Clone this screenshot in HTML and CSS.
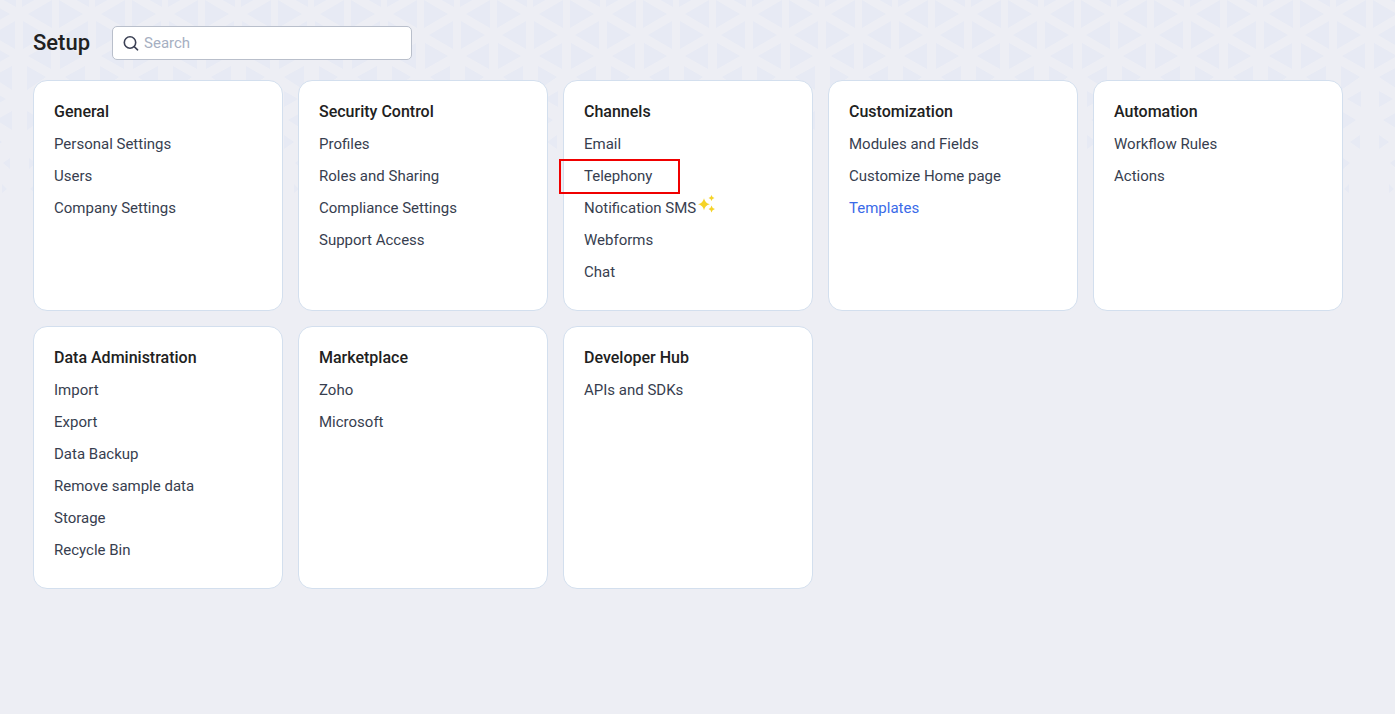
FILE: index.html
```html
<!DOCTYPE html>
<html lang="en">
<head>
<meta charset="utf-8">
<meta name="viewport" content="width=device-width, initial-scale=1">
<title>Setup</title>
<link rel="stylesheet" href="styles.css">
</head>
<body>
<svg class="backdrop" aria-hidden="true">
  <defs>
    <pattern id="tri" width="73" height="220" patternUnits="userSpaceOnUse">
      <g id="cell">
        <path d="M22-21V7L47-7ZM16-21V7L-9-7Z"/>
        <path d="M59 0V28L83 14ZM52 0V28L28 14Z"/>
        <path d="M23 21V49L47 35ZM15 21V49L-9 35Z"/>
        <path d="M60 43V69L83 56ZM51 43V69L28 56Z"/>
        <path d="M27 66V90L46 77ZM12 66V90L-8 77Z"/>
        <path d="M65 91V107L79 99ZM47 91V107L33 99Z"/>
        <path d="M27 111V130L42 120ZM12 111V130L-4 120Z"/>
        <path d="M65 135V149L75 142ZM46 135V149L36 142Z"/>
        <path d="M29 158V169L36 163ZM10 158V169L3 163Z"/>
        <path d="M75 184V193L80 189ZM35 184V193L30 189Z"/>
      </g>
      <use href="#cell" x="73"/>
      <use href="#cell" x="-73"/>
    </pattern>
  </defs>
  <rect width="100%" height="220" fill="url(#tri)"/>
</svg>
<header class="topbar">
  <h1 class="page-title">Setup</h1>
  <label class="search">
    <svg class="search-icon" viewBox="0 0 16 16" aria-hidden="true"><circle cx="7" cy="7.500" r="5.700"/><path d="M11.200 11.700L14.600 14.800"/></svg>
    <input class="search-input" type="search" placeholder="Search" aria-label="Search">
  </label>
</header>
<main class="cards">
  <section class="card">
    <h2 class="card-title">General</h2>
    <ul class="links">
      <li><a href="#">Personal Settings</a></li>
      <li><a href="#">Users</a></li>
      <li><a href="#">Company Settings</a></li>
    </ul>
  </section>
  <section class="card">
    <h2 class="card-title">Security Control</h2>
    <ul class="links">
      <li><a href="#">Profiles</a></li>
      <li><a href="#">Roles and Sharing</a></li>
      <li><a href="#">Compliance Settings</a></li>
      <li><a href="#">Support Access</a></li>
    </ul>
  </section>
  <section class="card">
    <h2 class="card-title">Channels</h2>
    <ul class="links">
      <li><a href="#">Email</a></li>
      <li class="marked"><a href="#">Telephony</a></li>
      <li class="featured"><a href="#">Notification SMS</a><svg class="sparkle" viewBox="0 0 18 18" aria-hidden="true"><path d="M6 3.300Q7 8.200 11.800 9.300Q7 10.400 6 15.300Q5 10.400 0 9.300Q5 8.200 6 3.300ZM13.500 0Q14 2.500 16.500 3Q14 3.500 13.500 6Q13 3.500 10.500 3Q13 2.500 13.500 0ZM13.500 10.500Q14 13.300 17 14Q14 14.700 13.500 17.500Q13 14.700 10.500 14Q13 13.300 13.500 10.500Z"/></svg></li>
      <li><a href="#">Webforms</a></li>
      <li><a href="#">Chat</a></li>
    </ul>
  </section>
  <section class="card">
    <h2 class="card-title">Customization</h2>
    <ul class="links">
      <li><a href="#">Modules and Fields</a></li>
      <li><a href="#">Customize Home page</a></li>
      <li><a class="active" href="#">Templates</a></li>
    </ul>
  </section>
  <section class="card">
    <h2 class="card-title">Automation</h2>
    <ul class="links">
      <li><a href="#">Workflow Rules</a></li>
      <li><a href="#">Actions</a></li>
    </ul>
  </section>
  <section class="card">
    <h2 class="card-title">Data Administration</h2>
    <ul class="links">
      <li><a href="#">Import</a></li>
      <li><a href="#">Export</a></li>
      <li><a href="#">Data Backup</a></li>
      <li><a href="#">Remove sample data</a></li>
      <li><a href="#">Storage</a></li>
      <li><a href="#">Recycle Bin</a></li>
    </ul>
  </section>
  <section class="card">
    <h2 class="card-title">Marketplace</h2>
    <ul class="links">
      <li><a href="#">Zoho</a></li>
      <li><a href="#">Microsoft</a></li>
    </ul>
  </section>
  <section class="card">
    <h2 class="card-title">Developer Hub</h2>
    <ul class="links">
      <li><a href="#">APIs and SDKs</a></li>
    </ul>
  </section>
</main>
</body>
</html>
```
FILE: styles.css
```css
*,
*::before,
*::after {
  box-sizing: border-box;
}

body {
  margin: 0;
  min-height: 100vh;
  padding: 26px 33px;
  background: #edeef4;
  color: #373e4f;
  font: 15px/32px Roboto, "Liberation Sans", sans-serif;
}

.backdrop {
  position: absolute;
  top: 0;
  left: 0;
  z-index: -1;
  width: 100%;
  height: 220px;
}

#cell {
  fill: #e7eaf4;
}

.topbar {
  display: flex;
  align-items: center;
  gap: 22px;
  margin-bottom: 20px;
}

.page-title {
  margin: 0;
  color: #212121;
  font-size: 22px;
  font-weight: 500;
  line-height: 34px;
}

.search {
  display: flex;
  align-items: center;
  gap: 5px;
  width: 300px;
  height: 34px;
  padding: 0 10px;
  background: #fff;
  border: 1px solid #b9bfcb;
  border-radius: 5px;
}

.search-icon {
  flex: none;
  width: 16px;
  height: 16px;
  fill: none;
  stroke: #3b4054;
  stroke-width: 1.6;
  stroke-linecap: round;
}

.search-input {
  flex: 1;
  min-width: 0;
  padding: 0;
  background: none;
  border: 0;
  outline: 0;
  color: inherit;
  font: inherit;
  line-height: 20px;
}

.search-input::placeholder {
  color: #a6afc2;
}

.cards {
  display: grid;
  grid-template-columns: repeat(auto-fill, 250px);
  gap: 15px;
}

.card {
  padding: 15px 20px 22px;
  background: #fff;
  border: 1px solid #d3dfee;
  border-radius: 14px;
}

.card-title {
  margin: 0;
  color: #212121;
  font-size: 16px;
  font-weight: 500;
  line-height: 32px;
}

.links {
  margin: 0;
  padding: 0;
  list-style: none;
}

.links a {
  color: inherit;
  text-decoration: none;
}

.links .active {
  color: #3a6ae8;
}

.marked {
  position: relative;
}

.marked::after {
  content: "";
  position: absolute;
  top: -1px;
  left: -25px;
  width: 121px;
  height: 35px;
  border: 2px solid #f00000;
  pointer-events: none;
}

.featured {
  display: flex;
  gap: 2px;
}

.sparkle {
  width: 18px;
  height: 18px;
  margin-top: 3px;
  fill: #f5d327;
}
```
